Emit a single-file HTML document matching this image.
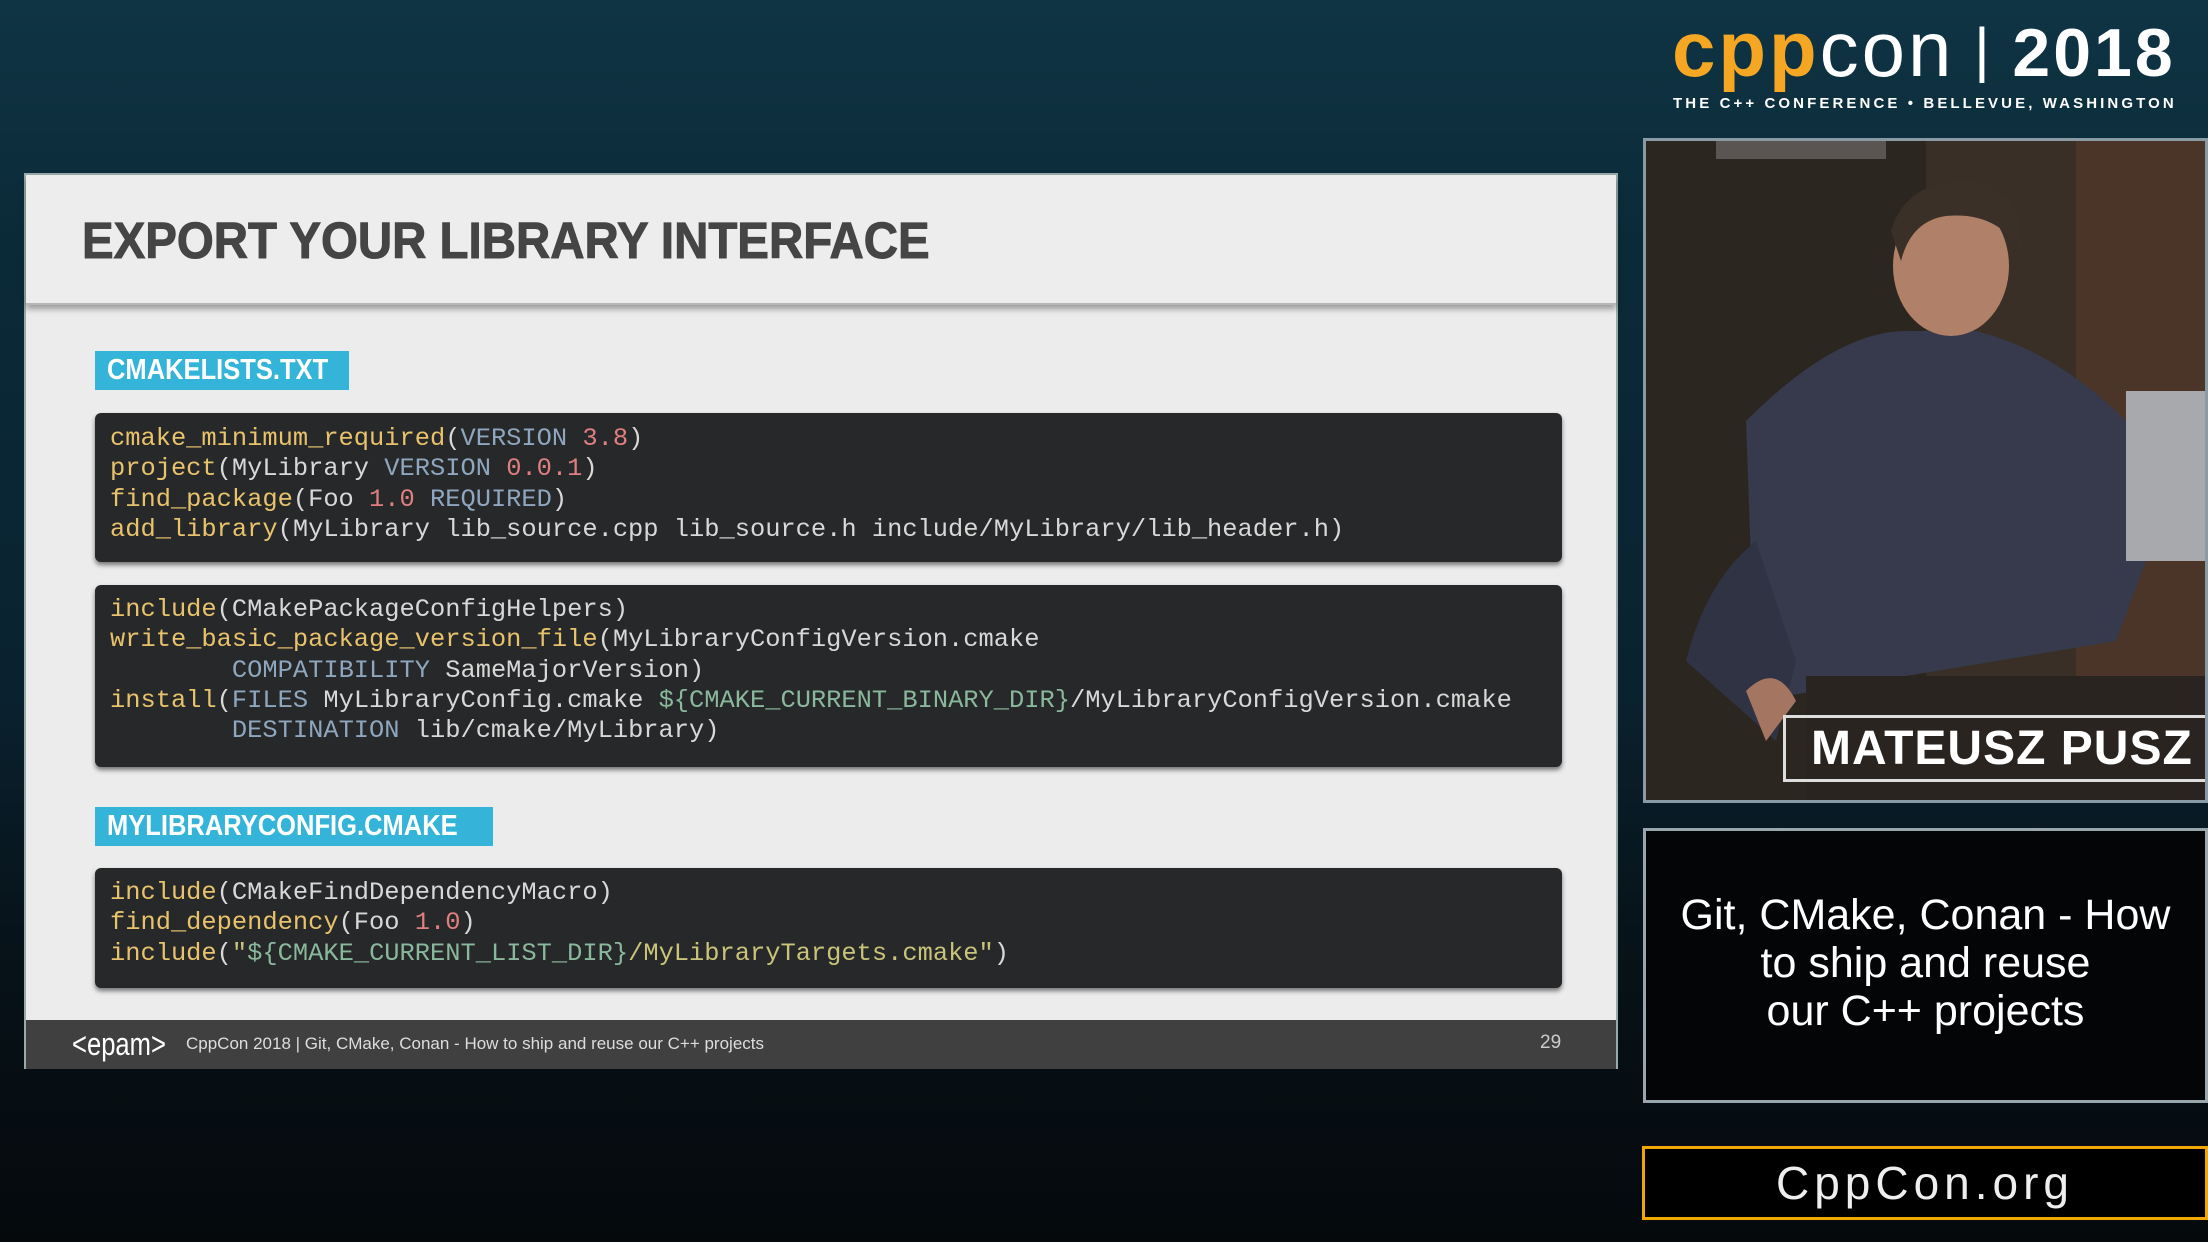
<!DOCTYPE html>
<html><head><meta charset="utf-8"><style>
*{margin:0;padding:0;box-sizing:border-box}
body{width:2208px;height:1242px;overflow:hidden;position:relative;font-family:"Liberation Sans",sans-serif;
background:linear-gradient(180deg,#0f3444 0%,#0b2a38 20%,#0a2230 55%,#07131a 75%,#05090c 100%);}
.slide{position:absolute;left:24px;top:173px;width:1594px;height:896px;background:#ececec;border:2px solid #9aa;}
.tband{position:absolute;left:0;top:0;width:100%;height:130px;background:#ededed;box-shadow:0 4px 6px rgba(0,0,0,.35);border-bottom:2px solid #b8b8b8}
.title{position:absolute;left:56px;top:36px;font-weight:bold;font-size:51px;color:#454545;white-space:nowrap;transform:scaleX(.93);transform-origin:left;-webkit-text-stroke:1px #454545}
.tag{position:absolute;left:69px;background:#34b4d8;color:#fff;font-weight:bold;font-size:29px;height:39px;line-height:39px;padding-left:12px;white-space:nowrap}
.tag span{display:inline-block;transform:scaleX(.88);transform-origin:left}
.code{position:absolute;left:69px;width:1467px;background:#272829;border-radius:6px;box-shadow:0 3px 5px rgba(0,0,0,.5);
font-family:"Liberation Mono",monospace;font-size:25.4px;line-height:30.3px;color:#d8d8d8;padding-left:15px;white-space:pre}
.k{color:#e9c36b}.b{color:#8fa6bf}.n{color:#e07f80}.s{color:#c9c47a}.v{color:#8ab89c}
.foot{position:absolute;left:0;top:845px;width:100%;height:49px;background:#404040;color:#ddd}
.foot .logo{position:absolute;left:46px;top:6px;font-size:32px;color:#fff;transform:scaleX(.8);transform-origin:left}
.foot .t{position:absolute;left:160px;top:14px;font-size:17px;color:#ddd}
.foot .p{position:absolute;left:1514px;top:12px;font-size:19px;color:#ccc}
.cpp{position:absolute;left:1672px;top:4px;font-size:78px;color:#f5a623;letter-spacing:3px;white-space:nowrap}
.sub{position:absolute;left:1673px;top:95px;font-size:15px;color:#fff;letter-spacing:3.1px;font-weight:bold;white-space:nowrap}
.video{position:absolute;left:1643px;top:138px;width:565px;height:665px;border:3px solid #8a9aa4;overflow:hidden;background:#3b3028}
.box{position:absolute;left:1643px;top:828px;width:565px;height:275px;border:3px solid #9aa6ae;background:#030507;color:#fff;text-align:center;font-size:43px;line-height:48px;padding-top:60px}
.org{position:absolute;left:1642px;top:1146px;width:566px;height:74px;border:3px solid #f0a800;background:#000;color:#eee;font-size:46px;letter-spacing:5px;text-align:center;line-height:68px}
</style></head><body>
<div class="slide">
 <div class="tband"><div class="title">EXPORT YOUR LIBRARY INTERFACE</div></div>
 <div class="tag" style="top:176px;width:254px"><span>CMAKELISTS.TXT</span></div>
 <div class="code" style="top:238px;height:149px;padding-top:11px"><span class="k">cmake_minimum_required</span>(<span class="b">VERSION</span> <span class="n">3.8</span>)
<span class="k">project</span>(MyLibrary <span class="b">VERSION</span> <span class="n">0.0.1</span>)
<span class="k">find_package</span>(Foo <span class="n">1.0</span> <span class="b">REQUIRED</span>)
<span class="k">add_library</span>(MyLibrary lib_source.cpp lib_source.h include/MyLibrary/lib_header.h)</div>
 <div class="code" style="top:410px;height:182px;padding-top:10px"><span class="k">include</span>(CMakePackageConfigHelpers)
<span class="k">write_basic_package_version_file</span>(MyLibraryConfigVersion.cmake
        <span class="b">COMPATIBILITY</span> SameMajorVersion)
<span class="k">install</span>(<span class="b">FILES</span> MyLibraryConfig.cmake <span class="v">${CMAKE_CURRENT_BINARY_DIR}</span>/MyLibraryConfigVersion.cmake
        <span class="b">DESTINATION</span> lib/cmake/MyLibrary)</div>
 <div class="tag" style="top:632px;width:398px"><span>MYLIBRARYCONFIG.CMAKE</span></div>
 <div class="code" style="top:693px;height:120px;padding-top:10px"><span class="k">include</span>(CMakeFindDependencyMacro)
<span class="k">find_dependency</span>(Foo <span class="n">1.0</span>)
<span class="k">include</span>(<span class="s">"</span><span class="v">${CMAKE_CURRENT_LIST_DIR}</span><span class="s">/MyLibraryTargets.cmake"</span>)</div>
 <div class="foot"><div class="logo">&lt;epam&gt;</div><div class="t">CppCon 2018 | Git, CMake, Conan - How to ship and reuse our C++ projects</div><div class="p">29</div></div>
</div>
<div class="cpp"><b>cpp</b><span style="color:#fff">con</span><span style="color:#fff;font-size:60px;position:relative;top:-6px"> | </span><b style="color:#fff;font-size:68px">2018</b></div>
<div class="sub">THE C++ CONFERENCE • BELLEVUE, WASHINGTON</div>
<div class="video">
 <svg width="565" height="665" viewBox="0 0 565 665">
  <rect width="565" height="665" fill="#3a2f27"/>
  <rect x="0" y="0" width="280" height="665" fill="#2c2621"/>
  <rect x="70" y="0" width="170" height="18" fill="#5a5552"/>
  <rect x="430" y="0" width="135" height="665" fill="#4a3528"/>
  <path d="M100 280 Q190 190 260 190 L330 190 Q410 210 480 280 L500 420 L470 500 L110 560 Z" fill="#363a4c"/>
  <path d="M40 520 Q60 440 110 400 L150 520 L130 600 Z" fill="#2f3344"/>
  <ellipse cx="305" cy="125" rx="58" ry="70" fill="#b08068"/>
  <path d="M245 90 Q260 40 320 40 Q380 45 375 110 Q350 70 300 75 Q265 80 255 120 Z" fill="#3a3028"/>
  <path d="M100 550 Q130 520 150 560 L120 600 Z" fill="#a47560"/>
  <rect x="480" y="250" width="85" height="170" fill="#a8a9ad"/>
  <rect x="160" y="535" width="405" height="126" fill="#2a2420"/>
 </svg>
 <div style="position:absolute;left:137px;top:574px;width:430px;height:67px;border:3px solid #ddd;border-right:none"></div>
 <div style="position:absolute;left:165px;top:580px;font-size:48px;font-weight:bold;color:#fff;letter-spacing:1px;white-space:nowrap">MATEUSZ PUSZ</div>
</div>
<div class="box">Git, CMake, Conan - How<br>to ship and reuse<br>our C++ projects</div>
<div class="org">CppCon.org</div>
</body></html>
